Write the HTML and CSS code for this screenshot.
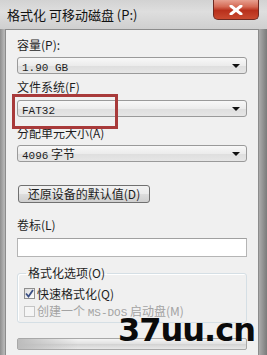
FILE: index.html
```html
<!DOCTYPE html>
<html lang="zh-CN">
<head>
    <meta charset="UTF-8">
    <meta name="viewport" content="width=device-width, initial-scale=1.0">
    <title>格式化 可移动磁盘 (P:)</title>
    <link rel="stylesheet" href="styles.css">
</head>
<body>
    <div class="window">
        <div class="titlebar">
            <span class="title">格式化 可移动磁盘 (P:)</span>
            <div class="close">
                <svg width="14" height="10" viewBox="0 0 14 10">
                    <path d="M2 1 L12 9 M12 1 L2 9" stroke="#ffffff" stroke-width="3" stroke-linecap="round"/>
                </svg>
            </div>
        </div>
        <div class="client">
            <div class="label lbl-first">容量(P):</div>
            <div class="select sel-first"><span class="mono">1.90 GB</span><span class="arrow"></span></div>

            <div class="label lbl-next">文件系统(F)</div>
            <div class="select sel-next"><span class="mono">FAT32</span><span class="arrow"></span></div>

            <div class="label lbl-third">分配单元大小(A)</div>
            <div class="select sel-first"><span class="mono">4096</span>&nbsp;字节<span class="arrow"></span></div>

            <button class="btn">还原设备的默认值(D)</button>

            <div class="label lbl-vol">卷标(L)</div>
            <div class="textbox"></div>

            <fieldset class="group">
                <legend>格式化选项(O)</legend>
                <div class="check-row first-row">
                    <span class="box checked">
                        <svg width="9" height="9" viewBox="0 0 9 9">
                            <path d="M1 4.5 L3.5 7.5 L8 1" fill="none" stroke="#3a4f84" stroke-width="1.8"/>
                        </svg>
                    </span>
                    <span>快速格式化(Q)</span>
                </div>
                <div class="check-row disabled">
                    <span class="box"></span>
                    <span>创建一个 <span class="mono">MS-DOS</span> 启动盘(M)</span>
                </div>
            </fieldset>

            <div class="progress"><div class="progress-fill"></div></div>
        </div>

        <div class="highlight"></div>
        <div class="watermark">37uu.cn</div>
    </div>
</body>
</html>
```

FILE: styles.css
```css
body {
    margin: 0;
    font-family: "Noto Sans CJK SC", "DejaVu Sans", sans-serif;
    font-size: 12px;
    color: #1e1e1e;
    overflow: hidden;
}
.window {
    position: relative;
    width: 267px;
    height: 355px;
    display: flex;
    flex-direction: column;
    background: linear-gradient(90deg, #8e8e8e 0, #b4b4b4 4px, #c4c4c4 40%, #bcbcbc 96%, #7a7a7a 100%);
    overflow: hidden;
}
.titlebar {
    height: 29px;
    display: flex;
    align-items: flex-start;
    background: linear-gradient(180deg, #d2d2d2 0, #dedede 40%, #cfcfcf 100%);
}
.title {
    margin: 6px 0 0 7px;
    font-size: 13px;
    line-height: 17px;
    color: #111111;
}
.close {
    margin-left: auto;
    margin-right: 8px;
    width: 46px;
    height: 20px;
    display: flex;
    align-items: center;
    justify-content: center;
    border: 1px solid #6f2a22;
    border-top: none;
    border-radius: 0 0 5px 5px;
    box-sizing: border-box;
    background: linear-gradient(180deg, #e7a090 0, #d56a55 35%, #b8301c 55%, #c94a30 100%);
}
.client {
    flex: 1;
    margin: 0 8px 0 5px;
    padding: 0 11px;
    background: #f0f0f0;
    border: 1px solid #8c8c8c;
    border-bottom: none;
    display: flex;
    flex-direction: column;
    align-items: stretch;
}
.label {
    height: 14px;
    line-height: 14px;
}
.lbl-first { margin-top: 8px; }
.lbl-next { margin-top: 6px; }
.lbl-third { margin-top: 9px; }
.lbl-vol { margin-top: 15px; }
.mono {
    font-family: "Liberation Mono", monospace;
    font-size: 11px;
}
.select {
    position: relative;
    height: 17px;
    line-height: 15px;
    padding-left: 4px;
    border: 1px solid #9a9a9a;
    border-radius: 3px;
    box-sizing: border-box;
    background: linear-gradient(180deg, #f8f8f8 0, #ececec 50%, #dedede 51%, #e6e6e6 100%);
}
.sel-first { margin-top: 5px; }
.sel-next { margin-top: 6px; }
.arrow {
    position: absolute;
    right: 6px;
    top: 6px;
    border-left: 4px solid transparent;
    border-right: 4px solid transparent;
    border-top: 4px solid #111111;
}
.btn {
    align-self: flex-start;
    margin: 23px 0 0 1px;
    width: 132px;
    height: 18px;
    padding: 0;
    font-family: "Noto Sans CJK SC", sans-serif;
    font-size: 12px;
    line-height: 16px;
    color: #1e1e1e;
    border: 1px solid #707070;
    border-radius: 3px;
    background: linear-gradient(180deg, #f2f2f2 0, #ebebeb 50%, #dddddd 51%, #cfcfcf 100%);
}
.textbox {
    margin-top: 6px;
    height: 19px;
    border: 1px solid #b5b5b5;
    border-top-color: #a0a0a0;
    box-sizing: border-box;
    background: #ffffff;
}
.group {
    margin: 9px 0 0 0;
    padding: 0 6px 4px 6px;
    border: 1px solid #d5dfe5;
    border-radius: 3px;
    box-shadow: inset 1px 1px 0 #ffffff;
}
.group legend {
    margin-left: 2px;
    padding: 0 2px;
    line-height: 14px;
}
.check-row {
    display: flex;
    align-items: center;
    gap: 2px;
    height: 13px;
    line-height: 13px;
    margin-top: 5px;
}
.first-row { margin-top: 7px; }
.box {
    width: 11px;
    height: 11px;
    box-sizing: border-box;
    border: 1px solid #8f8f8f;
    background: linear-gradient(135deg, #dcdcdc 0, #fdfdfd 100%);
    display: flex;
    align-items: center;
    justify-content: center;
}
.disabled { color: #a3a3a3; }
.disabled .box {
    border-color: #c4c4c4;
    background: #f5f5f5;
}
.progress {
    margin-top: 15px;
    height: 12px;
    border: 1px solid #a8a8a8;
    border-radius: 2px;
    box-sizing: border-box;
    background: linear-gradient(180deg, #f4f4f4 0, #e0e0e0 50%, #d2d2d2 51%, #e8e8e8 100%);
}
.progress-fill {
    width: 60px;
    height: 100%;
    background: linear-gradient(90deg, #bcbcbc, rgba(240,240,240,0));
}
.highlight {
    position: absolute;
    left: 12px;
    top: 94px;
    width: 106px;
    height: 35px;
    box-sizing: border-box;
    border: 3px solid #a83a3a;
}
.watermark {
    position: absolute;
    left: 118px;
    top: 312px;
    font-family: "DejaVu Sans", sans-serif;
    font-weight: bold;
    font-size: 32px;
    line-height: 36px;
    letter-spacing: -1px;
    color: #0a0a0a;
}
```
